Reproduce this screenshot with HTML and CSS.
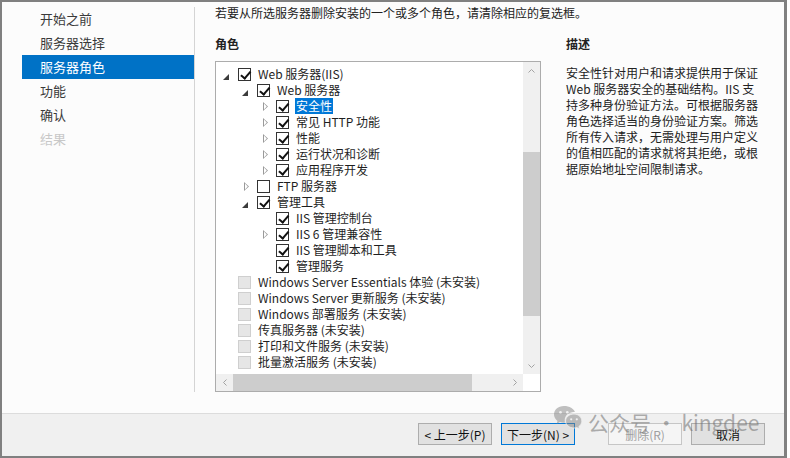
FILE: index.html
```html
<html>
 <head>
  <title>添加角色和功能向导</title>
  <meta charset="utf-8">
  <link rel="stylesheet" href="styles.css">
 </head>
 <body>
  <div class="window">
   <div class="main">
    <ul class="nav">
     <li>开始之前</li>
     <li>服务器选择</li>
     <li class="active">服务器角色</li>
     <li>功能</li>
     <li>确认</li>
     <li class="off">结果</li>
    </ul>
    <div class="content">
     <p class="lead">若要从所选服务器删除安装的一个或多个角色，请清除相应的复选框。</p>
     <div class="columns">
      <div>
       <h3>角色</h3>
       <div class="tree">
        <ul class="rows">
         <li class="l0"><i class="exp open"></i><b class="cb on"></b><span>Web 服务器(IIS)</span></li>
         <li class="l1"><i class="exp open"></i><b class="cb on"></b><span>Web 服务器</span></li>
         <li class="l2"><i class="exp shut"></i><b class="cb on"></b><span class="sel">安全性</span></li>
         <li class="l2"><i class="exp shut"></i><b class="cb on"></b><span>常见 HTTP 功能</span></li>
         <li class="l2"><i class="exp shut"></i><b class="cb on"></b><span>性能</span></li>
         <li class="l2"><i class="exp shut"></i><b class="cb on"></b><span>运行状况和诊断</span></li>
         <li class="l2"><i class="exp shut"></i><b class="cb on"></b><span>应用程序开发</span></li>
         <li class="l1"><i class="exp shut"></i><b class="cb"></b><span>FTP 服务器</span></li>
         <li class="l1"><i class="exp open"></i><b class="cb on"></b><span>管理工具</span></li>
         <li class="l2"><i class="exp"></i><b class="cb on"></b><span>IIS 管理控制台</span></li>
         <li class="l2"><i class="exp shut"></i><b class="cb on"></b><span>IIS 6 管理兼容性</span></li>
         <li class="l2"><i class="exp"></i><b class="cb on"></b><span>IIS 管理脚本和工具</span></li>
         <li class="l2"><i class="exp"></i><b class="cb on"></b><span>管理服务</span></li>
         <li class="l0"><i class="exp"></i><b class="cb dis"></b><span>Windows Server Essentials 体验 (未安装)</span></li>
         <li class="l0"><i class="exp"></i><b class="cb dis"></b><span>Windows Server 更新服务 (未安装)</span></li>
         <li class="l0"><i class="exp"></i><b class="cb dis"></b><span>Windows 部署服务 (未安装)</span></li>
         <li class="l0"><i class="exp"></i><b class="cb dis"></b><span>传真服务器 (未安装)</span></li>
         <li class="l0"><i class="exp"></i><b class="cb dis"></b><span>打印和文件服务 (未安装)</span></li>
         <li class="l0"><i class="exp"></i><b class="cb dis"></b><span>批量激活服务 (未安装)</span></li>
        </ul>
        <div class="vbar">
         <div class="arrow"><svg width="7" height="4" viewBox="0 0 7 4"><path d="M0.5 3.5 L3.5 0.5 L6.5 3.5"/></svg></div>
         <div class="thumb"></div>
         <div class="arrow"><svg width="7" height="4" viewBox="0 0 7 4"><path d="M0.5 0.5 L3.5 3.5 L6.5 0.5"/></svg></div>
        </div>
        <div class="hbar">
         <div class="arrow"><svg width="4" height="7" viewBox="0 0 4 7"><path d="M3.5 0.5 L0.5 3.5 L3.5 6.5"/></svg></div>
         <div class="thumb"></div>
         <div class="arrow"><svg width="4" height="7" viewBox="0 0 4 7"><path d="M0.5 0.5 L3.5 3.5 L0.5 6.5"/></svg></div>
        </div>
        <div class="corner"></div>
       </div>
      </div>
      <div>
       <h3>描述</h3>
       <p class="desc">安全性针对用户和请求提供用于保证 Web 服务器安全的基础结构。IIS 支持多种身份验证方法。可根据服务器角色选择适当的身份验证方案。筛选所有传入请求，无需处理与用户定义的值相匹配的请求就将其拒绝，或根据原始地址空间限制请求。</p>
      </div>
     </div>
    </div>
   </div>
   <div class="footer">
    <button>&lt; 上一步(P)</button>
    <button class="default">下一步(N) &gt;</button>
    <button class="gap" disabled>删除(R)</button>
    <button>取消</button>
   </div>
   <div class="mark">
    <svg width="30" height="26" viewBox="0 0 30 26">
     <path class="b1" d="M11 1C5 1 1 5 1 9.6c0 2.6 1.4 4.8 3.5 6.3L3.6 19l3.3-1.9c1.2.4 2.6.6 4.1.6.4 0 .8 0 1.1-.1-.3-.8-.4-1.600-.4-2.4 0-4.6 4.2-8.2 9.3-8.2h.9C20.9 3.7 16.4 1 11 1z"/>
     <circle class="eye" cx="7.5" cy="7.3" r="1.3"/>
     <circle class="eye" cx="14.3" cy="7.3" r="1.3"/>
     <path class="b2" d="M21 9C16.3 9 12.6 12.1 12.6 16s3.7 7 8.4 7c1 0 2-.1 2.9-.4l2.6 1.5-.7-2.5c1.8-1.3 3-3.2 3-5.4C28.8 12.1 25.4 9 21 9z"/>
     <circle class="eye" cx="18.2" cy="14.3" r="1.1"/>
     <circle class="eye" cx="23.8" cy="14.3" r="1.1"/>
    </svg>
    <span>公众号 · kingdee</span>
   </div>
  </div>
 </body>
</html>
```

FILE: styles.css
```css
* {box-sizing:border-box}
body {margin:0; background:#fff; font-family:"Noto Sans CJK SC", "Noto Sans", sans-serif; font-size:12px; color:#1e1e1e}
ul {list-style:none; margin:0; padding:0}
p, h3 {margin:0}

.window {position:relative; width:787px; height:458px; border:2px solid #808080; border-right-width:3px; display:flex; flex-direction:column; background:#fcfcfc}
.main {flex:1; display:flex}

/* wizard steps */
.nav {width:193px; margin:5px 0 21px; padding-left:20px; border-right:1px solid #d4d4d4}
.nav li {height:24px; line-height:24px; padding-left:18px; font-size:13px; color:#3a3a3a}
.nav .active {background:#0072c6; color:#fff}
.nav .off {color:#c8c8c8}

.content {flex:1; padding:3px 0 0 20px}
.lead {line-height:16px; color:#222}
.columns {display:grid; grid-template-columns:326px 195px; column-gap:25px; margin-top:15px}
h3 {font-size:12px; font-weight:bold; line-height:16px; color:#222}

/* role tree */
.tree {margin-top:9px; width:326px; height:331px; border:1px solid #acacac; background:#fff; display:grid; grid-template-columns:307px 17px; grid-template-rows:312px 17px}
.rows {padding-top:4px; overflow:hidden}
.rows li {height:16px; display:flex; align-items:center; white-space:nowrap; padding-left:3px}
.rows .l1 {padding-left:22px}
.rows .l2 {padding-left:41px}
.exp {width:19px; height:16px; flex:none; position:relative}
.exp.open::after {content:""; position:absolute; left:4px; top:8px; border-style:solid; border-width:0 0 6px 6px; border-color:transparent transparent #3c3c3c transparent}
.exp.shut::after {content:""; position:absolute; left:6px; top:4px; width:5px; height:9px; background:#9a9a9a; clip-path:polygon(0 0, 100% 50%, 0 100%, 0 0, 1px 1.6px, 1px 7.4px, 3.8px 4.5px, 1px 1.6px)}
.cb {width:13px; height:13px; flex:none; border:1px solid #333; background:#fff; margin-right:7px; position:relative}
.cb.on::after {content:""; position:absolute; left:3.5px; top:0.5px; width:3.5px; height:7.5px; border:solid #111; border-width:0 2px 2px 0; transform:rotate(40deg)}
.cb.dis {background:#e6e6e6; border-color:#cfcfcf}
.rows span {line-height:16px; padding:0 1px; margin-left:-1px}
.rows .sel {background:#0078d7; color:#fff}

/* scrollbars */
.vbar, .hbar {background:#f0f0f0; display:flex}
.vbar {flex-direction:column}
.arrow {width:17px; height:17px; flex:none; display:flex; align-items:center; justify-content:center}
.arrow path {fill:none; stroke:#a3a3a3; stroke-width:1}
.vbar .thumb {margin-top:73px; height:164px; background:#cdcdcd}
.vbar .arrow:last-child {margin-top:auto}
.hbar .thumb {margin-left:0; width:239px; background:#cdcdcd}
.hbar .arrow:last-child {margin-left:auto}
.corner {background:#fff}

.desc {margin-top:13px; line-height:16px; color:#222; word-break:break-all}

/* buttons */
.footer {height:43px; border-top:1px solid #dcdcdc; background:#f0f0f0; display:flex; justify-content:flex-end; align-items:flex-start; padding:9px 19px 0 0; gap:9px}
button {width:74px; height:22px; padding:0; font:12px "Noto Sans CJK SC", "Noto Sans", sans-serif; color:#111; background:#e1e1e1; border:1px solid #adadad; border-radius:0}
button.default {border-color:#0078d7}
button:disabled {background:#f5f5f5; border-color:#c6c6c6; color:#a0a0a0}
button.gap {margin-left:24px}

/* watermark */
.mark {position:absolute; left:551px; top:403px; display:flex; align-items:flex-start; gap:5px; color:rgba(110,110,110,.55); font-size:21px; pointer-events:none; white-space:nowrap}
.mark span {line-height:26px; margin-top:4px}
.mark .b1, .mark .b2 {fill:rgba(130,130,130,.5)}
.mark .b2 {stroke:#f0f0f0; stroke-width:.8}
.mark .eye {fill:#f0f0f0}
```
